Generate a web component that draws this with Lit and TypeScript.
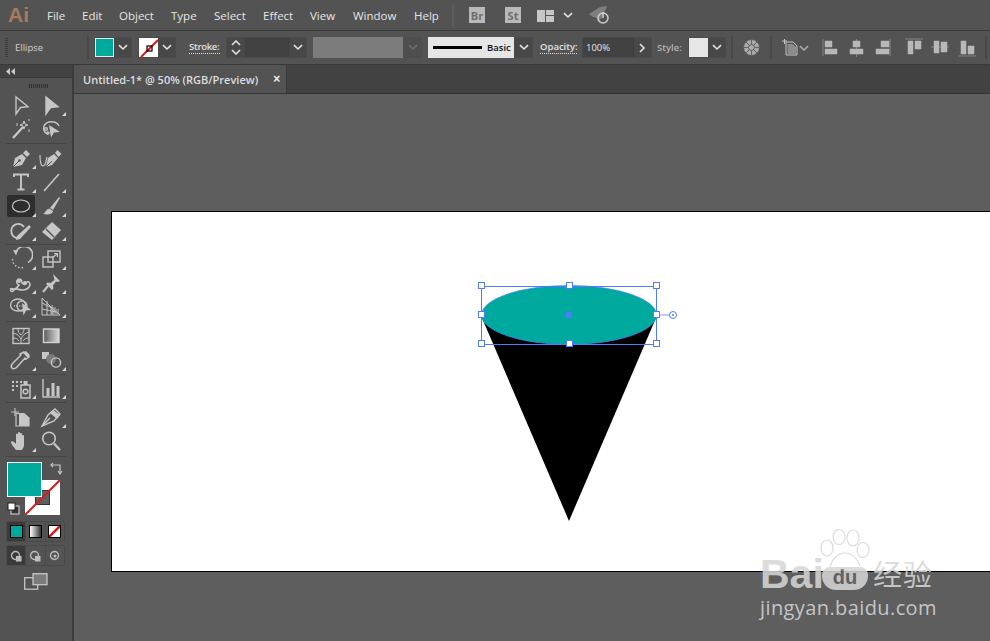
import { LitElement, html, css, svg } from "lit";
import { customElement } from "lit/decorators.js";

const C = "#c6c6c6";
const ico = (body: unknown, w = 24, h = 24) =>
  html`<svg width=${w} height=${h} viewBox="0 0 ${w} ${h}" fill="none" stroke=${C} stroke-width="1.4">${body}</svg>`;
const chev = (color = "#e4e4e4") =>
  html`<svg width="10" height="7" viewBox="0 0 10 7" fill="none" stroke=${color} stroke-width="1.6"><path d="M1 1.2 5 5l4-3.8"/></svg>`;

const tools: Record<string, unknown> = {
  sel: svg`<path d="M7 4v17l4.5-6.5 7.5-.8z"/>`,
  dir: svg`<path d="M7 4v17l4.5-6.5 7.5-.8z" fill="${C}"/>`,
  wand: svg`<path d="M4 21 14 10" stroke-width="2.4"/><path d="M15 4l1 3 3 1-3 1-1 3-1-3-3-1 3-1zM20 12v3M19 3h2M8 6v3" stroke-width="1"/>`,
  lasso: svg`<path d="M9 17C3 15 3 7 10 5c5-1 9 1 10 4" /><path d="M10 8l11 7-6 .6-3 5z" fill="${C}" stroke="none"/><circle cx="7" cy="12" r="1.4"/><circle cx="9" cy="16" r="1"/>`,
  pen: svg`<path d="M4 21 6 12l7-4 4 4-4 7z" fill="${C}" stroke="none"/><path d="M14 7l3-3 4 4-3 3z" fill="${C}" stroke="none"/><path d="M4 21l6-6" stroke="#535353" stroke-width="1"/><circle cx="10.500" cy="14.500" r="1.300" fill="#535353" stroke="none"/>`,
  curv: svg`<path d="M1 9c0 7 1 11 3 11 2.500 0 3-5 4-9" stroke-width="1.200"/><path d="M7 21 9 12l6-4 4 4-6 7z" fill="${C}" stroke="none"/><path d="M16 7l2.500-3 4 4-3 3z" fill="${C}" stroke="none"/><path d="M7 21l6-6" stroke="#535353" stroke-width="1"/>`,
  type: svg`<path d="M5 7V4.500h14V7M12 5v14M8.500 19.500h7" stroke-width="1.900"/>`,
  line: svg`<path d="M5 21 20 4" stroke-width="1.600"/>`,
  ell: svg`<ellipse cx="12" cy="12" rx="8.600" ry="6" stroke="#c8c8c8" stroke-width="1.200"/>`,
  brush: svg`<path d="M11 14 20 3l1 1-7 12z" fill="${C}" stroke="none"/><path d="M4 20c3-1 3-6 7-5l3 2c0 3-4 4-10 3z" fill="${C}" stroke="none"/>`,
  blob: svg`<path d="M15 9a7 7 0 1 0-5 11" stroke-width="2"/><path d="M8 18 20 7l2 2-11 12-4 1z" fill="${C}" stroke="none"/>`,
  erase: svg`<path d="M3 14 13 4l9 8-9 10z" fill="${C}" stroke="none"/><path d="M7 11l8 8" stroke="#535353"/>`,
  rot: svg`<path d="M7 5.500a8.500 8.500 0 1 1 12 10" stroke-width="1.700"/><path d="M3.500 12a8.500 8.500 0 0 0 12 8" stroke-dasharray="1.500 2"/><path d="M4 3l5 .5-2 5z" fill="${C}" stroke="none"/>`,
  scale: svg`<rect x="4" y="10" width="10" height="10"/><rect x="9" y="4" width="12" height="11"/><path d="M13 11l5-4M15 6.500h3.400v3.400" stroke-width="1.200"/>`,
  pup: svg`<path d="M3 18c3 2 5-1 7-4-3-1-3-5 0-6 2 0 3 2 3 4 2 2 4 2 5-1 2-1 3 1 3 3-1 3-4 5-8 5-2 0-4-1-5-1z" stroke-width="1.600"/><circle cx="3" cy="19" r="1.500"/><circle cx="10" cy="10" r="1.300" fill="${C}"/><circle cx="16" cy="12" r="1.300" fill="${C}"/>`,
  pin: svg`<path d="M14 3l7 7-2 1-2-.5-3 4 .5 3-1.500 1.500-6-6L8.500 11.500l3 .5 4-3-.5-2z" fill="${C}" stroke="none"/><path d="M9 15l-5 6" stroke-width="2"/>`,
  shape: svg`<ellipse cx="9" cy="10" rx="7.500" ry="6"/><ellipse cx="13" cy="11" rx="5" ry="5"/><path d="M5 11h8" stroke-dasharray="1 1.500"/><path d="M13 8l9 7-5 .5-2.500 5z" fill="${C}" stroke="none"/>`,
  persp: svg`<path d="M3 3v17h18L12 12zM3 3l9 9M3 8l10 5M3 14l14 3M8 6v14M13 10v10" stroke-width="1"/><path d="M11 12h6v2h3v5H11z" fill="${C}" fill-opacity=".45" stroke="none"/>`,
  mesh: svg`<rect x="4" y="4.500" width="16" height="15" /><path d="M4 9c5 1 6 3 8 6M20 8c-4 1-6 3-8 7v5M4 14c3 0 5 1 6 3M20 14c-3 0-5 1-6 3M9 4.500c0 3 1 5 3 6.500 2-2 3-4 3-6.500" stroke-width="1"/>`,
  grad: svg`<defs><linearGradient id="g1"><stop offset="0" stop-color="#5a5a5a"/><stop offset="1" stop-color="#dcdcdc"/></linearGradient></defs><rect x="4.500" y="5" width="15.500" height="13.500" fill="url(#g1)" stroke="#d4d4d4"/>`,
  drop: svg`<path d="M15 4l5 5-3 2-1-1-8 9c-2 2-4 2-5 1s-1-3 1-5l8-8-1-1z" stroke-width="1.500"/><path d="M14 5l3-2 4 4-2 3z" fill="${C}" stroke="none"/>`,
  blend: svg`<rect x="3" y="4" width="7" height="7" fill="${C}" stroke="none"/><circle cx="12" cy="11" r="5" fill="#7a7a7a" stroke="none"/><circle cx="17" cy="14.500" r="4.600"/>`,
  spray: svg`<rect x="12" y="9" width="9" height="13" stroke-width="1.500"/><rect x="14.500" y="5" width="4" height="4" fill="${C}" stroke="none"/><circle cx="16.500" cy="15.500" r="2.300" stroke-width="1.500"/><path d="M3 5h2v2H3zM7 5h2v2H7zM11 5h2v2h-2zM3 9h2v2H3zM7 9h2v2H7zM3 13h2v2H3z" fill="${C}" stroke="none"/>`,
  chart: svg`<path d="M4 3v18h17"/><path d="M8 12h3v8H8zM13 7h3v13h-3zM18 10h3v10h-3z" fill="${C}" stroke="none" transform="translate(-.500 0)"/>`,
  board: svg`<path d="M2 7h8M6 3v8" stroke-width="1.100"/><path d="M7 8.500h8l5 4.500v8H7z" stroke-width="1.200"/><path d="M10 9h5l5 4v8H10z" fill="${C}" stroke="none"/>`,
  slice: svg`<path d="M3 21 9 10 16 4l5 5-6 7z" stroke-width="1.400"/><path d="M14 5l7 5-3 4-7-6z" fill="${C}" stroke="none"/><path d="M3 21 11 13"/>`,
  hand: svg`<path d="M7 21c-2-3-5-6-5-8 0-1 2-1 3 0l2 2V6c0-2 2-2 2 0V4c0-1.500 2-1.500 2 0v1c0-1.500 2-1.500 2 0v2c0-1.500 2-1.500 2 0v9c0 2-1 3-2 5z" fill="${C}" stroke="none"/>`,
  zoom: svg`<circle cx="10" cy="9.500" r="6.300" stroke-width="1.600"/><path d="M15 14.500l6 6.500" stroke-width="2.400"/>`,
};

type Row = [string, boolean, string, boolean];
const sections: { cls: string; rows: Row[] }[] = [
  { cls: "s1", rows: [["sel", false, "dir", true], ["wand", false, "lasso", false]] },
  { cls: "", rows: [["pen", true, "curv", false], ["type", true, "line", true], ["ell", true, "brush", true], ["blob", true, "erase", true]] },
  { cls: "", rows: [["rot", true, "scale", true], ["pup", true, "pin", true], ["shape", true, "persp", true]] },
  { cls: "s4", rows: [["mesh", false, "grad", false], ["drop", true, "blend", true]] },
  { cls: "s5", rows: [["spray", true, "chart", true]] },
  { cls: "s6", rows: [["board", false, "slice", true], ["hand", true, "zoom", false]] },
];

@customElement("app-root")
export class AppRoot extends LitElement {
  static styles = css`
    :host { display: block; width: 990px; height: 641px; overflow: hidden; position: relative; background: #535353;
      font-family: "Open Sans", "Noto Sans", sans-serif; color: #e2e2e2; }
    .menubar { height: 30px; display: flex; align-items: center; background: #535353; }
    .logo { font: bold 21px "Liberation Sans", sans-serif; color: #a87a5e; width: 47px; padding-left: 8px; box-sizing: border-box; }
    .menus { display: flex; font-size: 11.500px; color: #e6e6e6; width: 405px; }
    .menus span { display: block; }
    .vs { width: 2px; height: 22px; background: #5d5d5d; }
    .bridge { width: 16px; height: 16px; background: #b9b9b9; color: #6e6e6e; font: bold 11px "Open Sans", sans-serif; display: flex; align-items: center; justify-content: center; }
    .br { margin-left: 15px; }
    .st { margin-left: 20px; }
    .lay { margin-left: 16px; display: flex; }
    .lay + svg { margin-left: 8px; }
    .rocket { margin-left: 15px; }
    .options { height: 35px; box-sizing: border-box; border-top: 1px solid #393939; border-bottom: 1px solid #393939; display: flex; align-items: center; background: #535353; font-size: 9.500px; }
    .grip { width: 3px; height: 19px; margin-left: 5px; background: repeating-linear-gradient(#3c3c3c 0 1px, transparent 1px 2px); }
    .ename { width: 44px; margin-left: 7px; color: #cfcfcf; }
    .osep { width: 2px; height: 23px; background: #484848; flex: none; }
    .ddl { height: 21px; box-sizing: border-box; border: 1px solid #4a4a4a; border-radius: 2px; display: flex; align-items: stretch; background: #484848; flex: none; }
    .swatch { width: 19px; box-sizing: border-box; border: 1px solid #e8e8e8; background: #00a99d; }
    .swatch.none { background: #fff; border-color: #fff; }
    .drop { width: 17px; display: flex; align-items: center; justify-content: center; }
    .lab { color: #e0e0e0; border-bottom: 1px dotted #e0e0e0; line-height: 12px; font-weight: 600; white-space: nowrap; }
    .lab.stk { width: 31px; letter-spacing: -.3px; }
    .lab.opa { width: 37px; }
    .plain { color: #b4b4b4; font-weight: 600; width: 26px; white-space: nowrap; }
    .spin { width: 18px; display: flex; flex-direction: column; align-items: center; justify-content: center; gap: 3px; border-right: 1px solid #3e3e3e; }
    .field { background: #424242; border-right: 1px solid #3e3e3e; }
    .gray { width: 90px; height: 21px; background: #7c7c7c; margin-left: 6px; flex: none; }
    .graydrop { width: 19px; height: 21px; background: #4e4e4e; display: flex; align-items: center; justify-content: center; flex: none; }
    .stroke { width: 86px; background: #e6e6e6; color: #111; display: flex; align-items: center; height: 21px; margin-left: 6px; flex: none; font-weight: 600; }
    .stroke i { display: block; width: 49px; height: 3px; background: #000; margin-left: 5px; margin-right: 5px; }
    .op { width: 51px; padding-left: 3px; box-sizing: border-box; background: #424242; border-right: 1px solid #3e3e3e; display: flex; align-items: center; color: #e6e6e6; }
    .arrow { width: 17px; display: flex; align-items: center; justify-content: center; }
    .main { display: flex; height: 576px; }
    .panel { width: 72px; flex: none; border-right: 2px solid #3c3c3c; background: #535353; }
    .phead { height: 12px; background: #424242; border-bottom: 1px solid #393939; display: flex; align-items: center; padding-left: 6px; color: #c8c8c8; }
    .pgrip { height: 15px; display: flex; align-items: center; justify-content: center; }
    .pgrip i { display: block; width: 19px; height: 4px; background: repeating-linear-gradient(90deg, #2f2f2f 0 1px, transparent 1px 2px); margin-left: 4px; }
    .tools { padding-left: 6px; }
    .sec { padding: 2px 0; border-bottom: 1px solid #454545; margin-right: 6px; }
    .sec.s1 { padding-top: 0; }
    .sec.s5 { padding-top: 1px; }
    .sec.s6 { padding-bottom: 3px; }
    .row { display: flex; height: 24px; }
    .cell { width: 30px; height: 24px; display: flex; align-items: center; justify-content: center; position: relative; }
    .cell.on::before { content: ""; position: absolute; left: 1px; top: 1px; width: 28px; height: 22px; background: #2d2d2d; border-radius: 2px; }
    .cell svg { position: relative; }
    .cell.tri::after { content: ""; position: absolute; right: 0; bottom: 1px; border-left: 4px solid transparent; border-bottom: 4px solid #d8d8d8; }
    .colors { position: relative; height: 59px; margin-top: 5px; }
    .fillbox { position: absolute; left: 7px; top: 0; width: 35px; height: 35px; box-sizing: border-box; background: #00a99d; border: 1px solid #fff; }
    .strokebox { position: absolute; left: 25px; top: 18px; width: 35px; height: 35px; box-sizing: border-box; }
    .swap { position: absolute; left: 50px; top: 0; }
    .defs { position: absolute; left: 7px; top: 40px; }
    .modes { display: flex; margin: 8px 0 0 6px; width: 59px; height: 21px; border: 1px solid #4a4a4a; border-radius: 2px; box-sizing: border-box; }
    .modes div { width: 19px; display: flex; align-items: center; justify-content: center; border-right: 1px solid #4a4a4a; }
    .modes div.on { background: #3a3a3a; }
    .modes div:last-child { border-right: 0; }
    .m { width: 13px; height: 13px; box-sizing: border-box; border: 1px solid #000; }
    .modes.b { margin-top: 3px; }
    .screen { display: flex; justify-content: center; margin-top: 7px; }
    .right { flex: 1; display: flex; flex-direction: column; min-width: 0; }
    .tabbar { height: 29px; background: #424242; border-bottom: 1px solid #333; box-sizing: border-box; display: flex; flex: none; }
    .tab { width: 213px; background: #535353; display: flex; align-items: center; box-sizing: border-box; padding-left: 9px; font-size: 11px; font-weight: 600; color: #dedede; border-right: 1px solid #3a3a3a; white-space: nowrap; }
    .tab b { margin-left: 15px; font: bold 12px "Liberation Sans", sans-serif; color: #eee; }
    .canvas { flex: 1; background: #5e5e5e; padding: 117px 0 0 37px; position: relative; overflow: hidden; }
    .board { width: 879px; height: 361px; box-sizing: border-box; background: #fff; border: 1px solid #000; border-right: 0; }
    .board svg { display: block; }
    .mark { position: absolute; left: 686px; top: 433px; width: 190px; height: 100px; color: #d7d7d7; opacity: .85; }
    .paw { position: absolute; left: 58px; top: 2px; }
    .bai { position: absolute; left: 0; top: 24px; font: bold 41px/46px "Liberation Sans", sans-serif; }
    .du { position: absolute; left: 62px; top: 40px; width: 46px; height: 23px; border-radius: 8px 8px 14px 14px; background: #d7d7d7; color: #626262; text-align: center; font: bold 20px/20px "Liberation Sans", sans-serif; }
    .cn { position: absolute; left: 113px; top: 26px; font: 29px/40px "Noto Sans CJK SC", sans-serif; white-space: nowrap; letter-spacing: 1px; }
    .url { position: absolute; left: 0; top: 67px; font: 20px/28px "Open Sans", sans-serif; letter-spacing: .4px; white-space: nowrap; }
  `;

  private menuBar() {
    const items: [string, number][] = [["File", 35], ["Edit", 37], ["Object", 52], ["Type", 43], ["Select", 49], ["Effect", 47], ["View", 43], ["Window", 61], ["Help", 38]];
    return html`<div class="menubar">
      <div class="logo">Ai</div>
      <div class="menus">${items.map(([t, w]) => html`<span style="width:${w}px">${t}</span>`)}</div>
      <div class="vs"></div>
      <div class="bridge br">Br</div>
      <div class="bridge st">St</div>
      <div class="lay"><svg width="18" height="13" viewBox="0 0 18 13" fill=${C}><path d="M0 1h8v12H0zM9 1h8v5H9zM9 7h8v6H9z"/></svg></div>
      ${chev()}
      <svg class="rocket" width="22" height="20" viewBox="0 0 22 20" fill="none">
        <path d="M1 9 12 2l7-1-4 10-5 6-1-4-4-1z" fill="#7e7e7e"/>
        <circle cx="15" cy="13" r="5" stroke="#cfcfcf" stroke-width="1.500"/><path d="M15 7v6" stroke="#cfcfcf" stroke-width="1.500"/>
      </svg>
    </div>`;
  }

  private options() {
    const aligns = [
      svg`<path d="M1 1v17M3 3h7v6H3zM3 11h12v5H3z"/>`,
      svg`<path d="M7.500 1v18M4 3h7v6H4zM1 11h13v5H1z"/>`,
      svg`<path d="M15 1v17M6 3h8v6H6zM1 11h13v5H1z"/>`,
      svg`<path d="M0 1h18M3 3h5v13H3zM10 3h6v8h-6z"/>`,
      svg`<path d="M0 9h18M3 3h5v12H3zM10 4h6v10h-6z"/>`,
      svg`<path d="M0 18h18M3 3h5v13H3zM10 8h6v8h-6z"/>`,
    ];
    const gaps = [13, 9, 8, 12, 8, 9];
    return html`<div class="options">
      <div class="grip"></div>
      <div class="ename">Ellipse</div>
      <div class="osep" style="margin-left:28px"></div>
      <div class="ddl" style="margin-left:5px"><div class="swatch"></div><div class="drop">${chev()}</div></div>
      <div class="ddl" style="margin-left:6px">
        <div class="swatch none"><svg width="19" height="19" viewBox="0 0 19 19"><path d="M1 18 18 1" stroke="#e0161d" stroke-width="2"/><rect x="7" y="7" width="5" height="5" fill="none" stroke="#000" stroke-width="1.200"/></svg></div>
        <div class="drop">${chev()}</div>
      </div>
      <div class="lab stk" style="margin-left:13px">Stroke:</div>
      <div class="ddl" style="margin-left:6px">
        <div class="spin">
          <svg width="10" height="6" viewBox="0 0 10 6" fill="none" stroke="#e4e4e4" stroke-width="1.500"><path d="M1 5l4-4 4 4"/></svg>
          <svg width="10" height="6" viewBox="0 0 10 6" fill="none" stroke="#e4e4e4" stroke-width="1.500"><path d="M1 1l4 4 4-4"/></svg>
        </div>
        <div class="field" style="width:42px"></div>
        <div class="drop">${chev()}</div>
      </div>
      <div class="gray"></div>
      <div class="graydrop">${chev("#6e6e6e")}</div>
      <div class="stroke"><i></i><span>Basic</span></div>
      <div class="ddl"><div class="drop">${chev()}</div></div>
      <div class="lab opa" style="margin-left:7px">Opacity:</div>
      <div class="ddl" style="margin-left:5px"><div class="op">100%</div><div class="arrow"><svg width="7" height="10" viewBox="0 0 7 10" fill="none" stroke="#e4e4e4" stroke-width="1.600"><path d="M1 1l4 4-4 4"/></svg></div></div>
      <div class="plain" style="margin-left:5px">Style:</div>
      <div class="ddl" style="margin-left:5px"><div class="swatch" style="background:#e6e6e6;border-color:#e6e6e6"></div><div class="drop">${chev()}</div></div>
      <div class="osep" style="margin-left:5px"></div>
      <svg style="margin-left:10px;flex:none" width="17" height="17" viewBox="0 0 17 17" fill="none" stroke="#535353" stroke-width=".8"><circle cx="8.500" cy="8.500" r="8" fill="#a9a9a9"/><circle cx="8.500" cy="8.500" r="3"/><path d="M8.500 1v4.500M8.500 11.500V16M1 8.500h4.500M11.500 8.500H16M3 3l3.500 3.500M10.500 10.500 14 14M14 3l-3.500 3.500M6.500 10.500 3 14"/></svg>
      <div class="osep" style="margin-left:10px"></div>
      <svg style="margin-left:10px;flex:none" width="16" height="17" viewBox="0 0 16 17" fill="none"><path d="M0 2h5M2.500 0v5" stroke=${C}/><path d="M4 3h7l4 4v9H4z" stroke=${C}/><path d="M5.500 5h5l3.500 3v7H5.500z" fill="#8c8c8c"/></svg>
      <div style="margin-left:1px;margin-top:2px;display:flex">${chev("#a8a8a8")}</div>
      ${aligns.map((a, i) => html`<svg style="margin-left:${gaps[i]}px;flex:none" width="18" height="20" viewBox="0 0 18 20" fill="#b8b8b8" stroke="none"><g stroke="#b8b8b8" stroke-width=".5">${a}</g></svg>`)}
      <div class="osep" style="margin-left:9px"></div>
    </div>`;
  }

  private panel() {
    return html`<div class="panel">
      <div class="phead"><svg width="9" height="7" viewBox="0 0 9 7" fill="#c8c8c8"><path d="M4 0v7L0 3.500zM9 0v7L5 3.500z"/></svg></div>
      <div class="pgrip"><i></i></div>
      <div class="tools">
        ${sections.map((s) => html`<div class="sec ${s.cls}">
          ${s.rows.map((r) => html`<div class="row">
            <div class="cell ${r[0] === "ell" ? "on" : ""} ${r[1] ? "tri" : ""}">${ico(tools[r[0]])}</div>
            <div class="cell ${r[3] ? "tri" : ""}">${ico(tools[r[2]])}</div>
          </div>`)}
        </div>`)}
      </div>
      <div class="colors">
        <div class="strokebox">
          <svg width="35" height="35" viewBox="0 0 35 35"><rect width="35" height="35" fill="#fff"/><rect x="10" y="10" width="15" height="15" fill="#606060"/><rect x="10.500" y="10.500" width="14" height="14" fill="none" stroke="#333"/><path d="M0 35 35 0" stroke="#e0161d" stroke-width="2"/></svg>
        </div>
        <div class="fillbox"></div>
        <svg class="swap" width="13" height="14" viewBox="0 0 13 14" fill="none" stroke=${C} stroke-width="1.200"><path d="M1 3h9v8"/><path d="M3 1 1 3l2 2M8 9l2 3 2-3"/></svg>
        <svg class="defs" width="13" height="13" viewBox="0 0 13 13"><rect x="4" y="4" width="8" height="8" fill="#333" stroke="#ddd"/><rect x="1" y="1" width="7" height="7" fill="#fff" stroke="#222"/></svg>
      </div>
      <div class="modes" style="margin-top:0">
        <div class="on"><span class="m" style="background:#00a99d"></span></div>
        <div><span class="m" style="background:linear-gradient(90deg,#fff,#333)"></span></div>
        <div><svg class="m" viewBox="0 0 13 13" style="background:#fff"><path d="M0 13 13 0" stroke="#e0161d" stroke-width="3"/></svg></div>
      </div>
      <div class="modes b">
        ${[0, 1, 2].map((i) => html`<div class=${i === 0 ? "on" : ""}>
          <svg width="12" height="12" viewBox="0 0 12 12" fill="none" stroke="#bdbdbd" stroke-width="1.400">
            <circle cx="5.500" cy="5.500" r="4"/>
            ${i < 2 ? svg`<rect x="6" y="6" width="5.500" height="5.500" fill="#bdbdbd" stroke="none"/>` : svg`<circle cx="6" cy="6" r="1.500" fill="#bdbdbd" stroke="none"/>`}
          </svg></div>`)}
      </div>
      <div class="screen">
        <svg width="24" height="17" viewBox="0 0 24 17" fill="none" stroke=${C} stroke-width="1.300"><rect x=".7" y="4.700" width="13" height="11.500"/><rect x="9" y=".7" width="14" height="11" fill="#7c7c7c"/></svg>
      </div>
    </div>`;
  }

  private art() {
    const B = "#4f7bff";
    const hs: [number, number][] = [[481, 285], [569, 285], [656, 285], [481, 314], [656, 314], [481, 343], [569, 343], [656, 343]];
    return html`<svg width="878" height="359" viewBox="112 212 878 359">
      <path d="M482 318H656L569 521z" fill="#000"/>
      <ellipse cx="569" cy="315" rx="87.500" ry="29.500" fill="#00a99d" stroke=${B} stroke-width=".7"/>
      <rect x="481.500" y="286.500" width="175" height="58" fill="none" stroke=${B}/>
      ${hs.map(([x, y]) => svg`<rect x="${x - 2.5}" y="${y - 2.5}" width="6" height="6" fill="#fff" stroke=${B}/>`)}
      <rect x="566" y="312" width="6" height="6" fill=${B}/>
      <path d="M660 315h9" stroke="#a8bbff" stroke-width="1.500"/>
      <circle cx="673" cy="315" r="3.500" fill="#fff" stroke=${B}/><circle cx="673" cy="315" r="1" fill=${B}/>
    </svg>`;
  }

  render() {
    return html`${this.menuBar()}${this.options()}
      <div class="main">
        ${this.panel()}
        <div class="right">
          <div class="tabbar"><div class="tab">Untitled-1* @ 50% (RGB/Preview)<b>×</b></div></div>
          <div class="canvas">
            <div class="board">${this.art()}</div>
            <div class="mark">
              <svg class="paw" width="52" height="44" viewBox="0 0 52 44" fill="none" stroke="#d7d7d7" stroke-width="1.200">
                <ellipse cx="9" cy="19" rx="6" ry="8"/><ellipse cx="21" cy="8" rx="6" ry="7.500"/><ellipse cx="35" cy="9" rx="6" ry="8"/><ellipse cx="45" cy="21" rx="6" ry="7.500"/>
                <path d="M12 38c2-8 8-14 15-14s13 6 15 13"/>
              </svg>
              <div class="bai">Bai</div>
              <div class="du">du</div>
              <div class="cn">经验</div>
              <div class="url">jingyan.baidu.com</div>
            </div>
          </div>
        </div>
      </div>`;
  }
}
